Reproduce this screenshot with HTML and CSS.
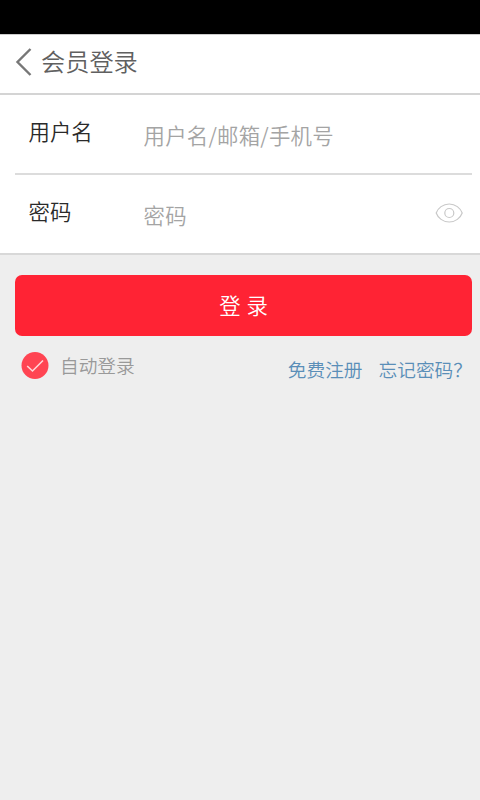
FILE: index.html
```
<!DOCTYPE html>
<html lang="zh-CN">
<head>
<meta charset="utf-8">
<meta name="viewport" content="width=device-width, initial-scale=1">
<title>会员登录</title>
<link rel="stylesheet" href="styles.css">
</head>
<body>
<div class="statusbar"></div>
<header class="header">
  <svg class="back" width="18" height="28" viewBox="0 0 18 28"><path d="M15.500 1 2.500 14l13 13"/></svg>
  <h1 class="title">会员登录</h1>
</header>
<main>
  <form class="login">
    <div class="fields">
      <div class="row">
        <label class="label" for="user">用户名</label>
        <input class="input" id="user" type="text" placeholder="用户名/邮箱/手机号">
      </div>
      <div class="row">
        <label class="label" for="pass">密码</label>
        <input class="input" id="pass" type="password" placeholder="密码">
        <svg class="eye" width="28" height="20" viewBox="0 0 28 20"><path d="M1.200 10C3 5 8 1 14.200 1s11.200 4 13 9c-1.800 5-6.800 9-13 9S3 15 1.200 10Z"/><circle cx="14.300" cy="10" r="4.500"/></svg>
      </div>
    </div>
    <button class="submit" type="button">登 录</button>
    <div class="options">
      <div class="auto">
        <svg class="check" width="28" height="28" viewBox="0 0 28 28"><circle cx="14" cy="13.500" r="13.500"/><path d="m6.200 14 5.300 5L22 8.500"/></svg>
        <span>自动登录</span>
      </div>
      <nav class="links">
        <a href="#">免费注册</a>
        <a href="#">忘记密码？</a>
      </nav>
    </div>
  </form>
</main>
</body>
</html>
```
FILE: styles.css
```
* {
  box-sizing: border-box;
}

body {
  margin: 0;
  min-height: 800px;
  background: #eee;
  font-family: "Noto Sans CJK SC", sans-serif;
  font-weight: 350;
}

.statusbar {
  height: 34px;
  background: #000;
}

.header {
  display: flex;
  align-items: center;
  height: 61px;
  padding-left: 15px;
  background: #fff;
  border-top: 1px solid #ccc;
  border-bottom: 2px solid #d4d4d4;
}

.back {
  margin-top: -5px;
  fill: none;
  stroke: #777;
  stroke-width: 2.4;
}

.title {
  margin: -7px 0 0 8px;
  font-size: 24.2px;
  line-height: 36px;
  font-weight: 350;
  color: #606060;
}

.fields {
  background: #fff;
  border-bottom: 2px solid #d8d8d8;
}

.row {
  display: flex;
  height: 78px;
  margin: 0 8px 0 15px;
  padding-left: 13.5px;
}

.row:first-child {
  height: 80px;
  border-bottom: 2px solid #dcdcdc;
}

.label {
  flex: 0 0 115px;
  padding-top: 20px;
  font-size: 21.4px;
  line-height: 32px;
  color: #2a2a2a;
}

.input {
  flex: 1;
  min-width: 0;
  height: 32px;
  margin-top: 23px;
  padding: 0;
  border: 0;
  outline: 0;
  background: none;
  font: inherit;
  font-size: 21.4px;
  letter-spacing: 0.25px;
}

.input::placeholder {
  color: #a4a4a4;
  opacity: 1;
}

.eye {
  margin: 28px 9px 0 0;
  fill: none;
  stroke: #c8c8c8;
  stroke-width: 1.2;
}

.submit {
  display: block;
  width: 457px;
  height: 61px;
  margin: 20px 0 0 15px;
  padding: 0 0 3px;
  border: 0;
  border-radius: 7px;
  background: #ff2334;
  color: #fff;
  font: inherit;
  font-size: 21.4px;
  word-spacing: 1px;
}

.options {
  display: flex;
  justify-content: space-between;
  padding: 16px 8px 0 21px;
}

.auto {
  display: flex;
  align-items: center;
  height: 28px;
  gap: 11px;
  font-size: 18.7px;
  color: #999;
}

.auto span {
  margin-top: -3px;
}

.check circle {
  fill: #ff4452;
}

.check path {
  fill: none;
  stroke: #ffd5d8;
  stroke-width: 1.6;
}

.links {
  display: flex;
  gap: 16px;
  padding-top: 3px;
  font-size: 18.7px;
  line-height: 28px;
}

.links a {
  color: #5a8eb8;
  text-decoration: none;
}
```
